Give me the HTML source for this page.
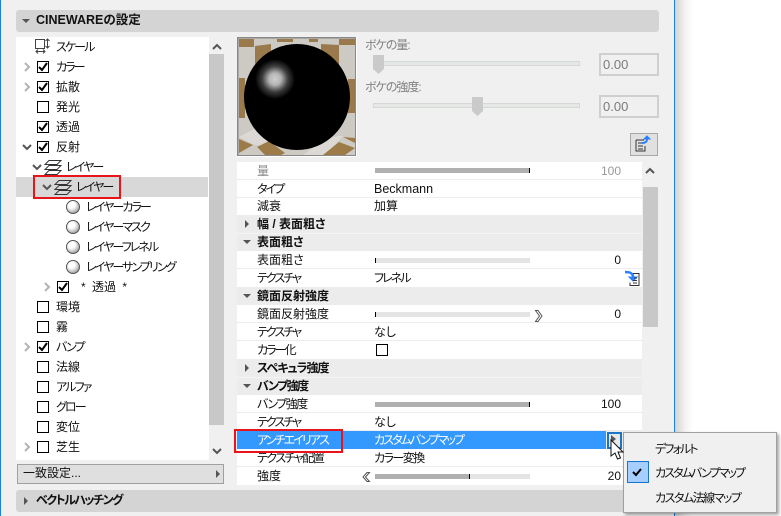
<!DOCTYPE html>
<html lang="ja"><head><meta charset="utf-8"><style>
html,body{margin:0;padding:0}
body{width:781px;height:516px;position:relative;overflow:hidden;background:#fff;font:12px/18px "Liberation Sans","Noto Sans CJK JP",sans-serif;color:#111;font-feature-settings:"palt"}
div,svg{position:absolute}
.t{white-space:nowrap;height:18px;line-height:18px}
.k{letter-spacing:-1.9px}
.m{letter-spacing:-1.5px}
.b{font-weight:bold}
.cb{width:10px;height:10px;border:1px solid #000;background:#fff;left:37px}
.row{left:237px;width:405px;height:17px;background:#fff;border-bottom:1px solid #ececec}
.grp{left:237px;width:405px;height:18px;background:#ececec}
.bar{left:375px;width:155px;height:5px}
.dk{background:#b0b0b0}.lt{background:#e4e4e4}
.tri{left:245px;width:0;height:0}
.r{border-top:4px solid transparent;border-bottom:4px solid transparent;border-left:4px solid #555}
.d{border-left:4px solid transparent;border-right:4px solid transparent;border-top:4px solid #555}
.radio{left:66px;width:14px;height:14px;border-radius:50%;border:1px solid #555;box-sizing:border-box;background:radial-gradient(circle at 38% 32%,#fff 30%,#bbb 65%,#666)}
.tr{text-align:right;width:60px;left:561px}
.sld{left:373px;width:205px;height:3px;background:#e6e8e6;border:1px solid #d5d9d5}
.fld{left:599px;width:56px;height:19px;border:2px solid #cfcfcf;background:#f0f0f0;color:#7a7a7a;font-size:13px;line-height:19px;text-indent:2px}
</style></head><body>
<div style="left:0;top:0;width:675px;height:516px;background:#f0f0f0"></div>
<div style="left:0;top:0;width:1px;height:516px;background:#1a80e0"></div>
<div style="left:674px;top:0;width:1px;height:516px;background:#1a80e0"></div>
<div style="left:675px;top:0;width:18px;height:516px;background:linear-gradient(90deg,#d4d4d4,#f4f4f4 60%,#fff)"></div>

<div style="left:16px;top:10px;width:643px;height:22px;background:#d4d4d4;border-radius:3px"></div>
<div class="tri d" style="left:22px;top:19px"></div>
<div class="t b" style="left:36px;top:11px;font-size:12.5px">CINEWAREの設定</div>

<div style="left:16px;top:37px;width:193px;height:423px;background:#fff"></div>
<div style="left:16px;top:177px;width:192px;height:20px;background:#d8d8d8"></div>
<div style="left:209px;top:54px;width:15px;height:371px;background:#c8c8c8"></div>

<div class="t k" style="left:56px;top:38px">スケール</div>
<div class="t k" style="left:56px;top:58px">カラー</div>
<div class="t" style="left:56px;top:78px">拡散</div>
<div class="t" style="left:56px;top:98px">発光</div>
<div class="t" style="left:56px;top:118px">透過</div>
<div class="t" style="left:56px;top:138px">反射</div>
<div class="t k" style="left:66px;top:158px">レイヤー</div>
<div class="t k" style="left:76px;top:178px">レイヤー</div>
<div class="t k" style="left:86px;top:198px">レイヤーカラー</div>
<div class="t k" style="left:86px;top:218px">レイヤーマスク</div>
<div class="t k" style="left:86px;top:238px">レイヤーフレネル</div>
<div class="t k" style="left:86px;top:258px">レイヤーサンプリング</div>
<div class="t" style="left:81px;top:278px;word-spacing:3px">* 透過 *</div>
<div class="t" style="left:56px;top:298px">環境</div>
<div class="t" style="left:56px;top:318px">霧</div>
<div class="t k" style="left:56px;top:338px">バンプ</div>
<div class="t" style="left:56px;top:358px">法線</div>
<div class="t k" style="left:56px;top:378px">アルファ</div>
<div class="t k" style="left:56px;top:398px">グロー</div>
<div class="t" style="left:56px;top:418px">変位</div>
<div class="t" style="left:56px;top:438px">芝生</div>

<div class="cb" style="top:61px"></div><div class="cb" style="top:81px"></div><div class="cb" style="top:101px"></div><div class="cb" style="top:121px"></div><div class="cb" style="top:141px"></div>
<div class="cb" style="top:281px;left:57px"></div>
<div class="cb" style="top:301px"></div><div class="cb" style="top:321px"></div><div class="cb" style="top:341px"></div><div class="cb" style="top:361px"></div><div class="cb" style="top:381px"></div><div class="cb" style="top:401px"></div><div class="cb" style="top:421px"></div><div class="cb" style="top:441px"></div>

<div class="radio" style="top:200px"></div><div class="radio" style="top:220px"></div><div class="radio" style="top:240px"></div><div class="radio" style="top:260px"></div>

<div style="left:17px;top:464px;width:205px;height:18px;background:#dfdfdf;border:1px solid #a0a0a0"></div>
<div class="t" style="left:23px;top:464px">一致設定...</div>
<div class="tri r" style="left:216px;top:470px"></div>

<div style="left:16px;top:490px;width:643px;height:22px;background:#d4d4d4;border-radius:3px"></div>
<div class="tri r" style="left:24px;top:497px"></div>
<div class="t b m" style="left:36px;top:491px">ベクトルハッチング</div>

<svg style="left:237px;top:37px;width:120px;height:120px" viewBox="0 0 120 120">
<defs><radialGradient id="g" gradientUnits="userSpaceOnUse" cx="38" cy="42" r="20"><stop offset="0" stop-color="#d0d0d0"/><stop offset=".3" stop-color="#b4b4b4"/><stop offset=".65" stop-color="#3c3c3c"/><stop offset="1" stop-color="#000"/></radialGradient></defs>
<rect width="120" height="120" fill="#cdcac4"/>
<path d="M2 2h15v8H2zM18 9l16-2v14l-16 8zM40 2h16v3H40zM72 2h9v3H72zM84 7l18 1v24L84 22zM102 2h16v6h-16zM2 41h6v40H2zM111 42h7v34h-7z" fill="#9a7a4c"/>
<path d="M2 100l15-8 20 14-5 2H18zM66 118l22-16 14-3 4 0-18 19z" fill="#dcd9d4"/>
<path d="M2 102l14 6-14 8zM20 110l12-6 16 12-4 2H28zM86 118l16-13 16 6-10 7zM106 100l12 6v-5z" fill="#9d7b49"/>
<rect x=".75" y=".75" width="118" height="118" fill="none" stroke="#888" stroke-width="1.500"/>
<rect x="119" y="0" width="1" height="120" fill="#fff"/><rect y="119" width="120" height="1" fill="#fff"/>
<circle cx="60" cy="60" r="53" fill="#000"/><circle cx="38" cy="42" r="20" fill="url(#g)"/>
</svg>

<div class="t" style="left:365px;top:36px;color:#808080;letter-spacing:-1px">ボケの量:</div>
<div class="t" style="left:365px;top:78px;color:#808080;letter-spacing:-1px">ボケの強度:</div>
<div class="sld" style="top:61px"></div>
<div class="sld" style="top:103px"></div>
<svg style="left:373px;top:55px;width:11px;height:20px"><path d="M0 0h11v14l-5.500 5L0 14z" fill="#cacaca"/></svg>
<svg style="left:472px;top:97px;width:11px;height:20px"><path d="M0 0h11v14l-5.500 5L0 14z" fill="#cacaca"/></svg>
<div class="fld" style="top:53px">0.00</div>
<div class="fld" style="top:95px">0.00</div>
<div style="left:630px;top:133px;width:26px;height:21px;background:#e0e0e0;border:1px solid #a8a8a8"></div>
<svg style="left:635px;top:135px;width:20px;height:18px" fill="none"><path d="M1 5h8M1 5v11h9v-5M3 8h5M3 11h5M3 14h5" stroke="#333" stroke-width="1"/><path d="M7 8c3 0 5-1 5-4" stroke="#2a80ff" stroke-width="2"/><path d="M9 4l3-3 3 3z" fill="#2a80ff" stroke="#2a80ff"/></svg>

<div class="row" style="top:162px"></div><div class="row" style="top:180px"></div><div class="row" style="top:198px;height:17px;border:0"></div>
<div class="grp" style="top:215px"></div><div class="grp" style="top:233px;border-top:1px solid #f4f4f4;height:17px"></div>
<div class="row" style="top:251px"></div><div class="row" style="top:269px;border:0;height:18px"></div>
<div class="grp" style="top:287px"></div>
<div class="row" style="top:305px"></div><div class="row" style="top:323px"></div><div class="row" style="top:341px;border:0;height:18px"></div>
<div class="grp" style="top:359px"></div><div class="grp" style="top:377px;border-top:1px solid #f4f4f4;height:17px"></div>
<div class="row" style="top:395px"></div><div class="row" style="top:413px"></div>
<div style="left:237px;top:431px;width:369px;height:18px;background:#3399ff"></div>
<div class="row" style="top:449px"></div><div class="row" style="top:467px;height:18px;border:0"></div>

<div class="t" style="left:257px;top:162px;color:#888">量</div>
<div class="t k" style="left:257px;top:180px">タイプ</div>
<div class="t" style="left:257px;top:197px">減衰</div>
<div class="t b" style="left:257px;top:215px">幅 / 表面粗さ</div>
<div class="t b" style="left:257px;top:233px">表面粗さ</div>
<div class="t" style="left:257px;top:251px">表面粗さ</div>
<div class="t k" style="left:257px;top:269px">テクスチャ</div>
<div class="t b" style="left:257px;top:287px">鏡面反射強度</div>
<div class="t" style="left:257px;top:305px">鏡面反射強度</div>
<div class="t k" style="left:257px;top:323px">テクスチャ</div>
<div class="t k" style="left:257px;top:341px">カラー化</div>
<div class="t b" style="left:257px;top:359px;letter-spacing:-1px">スペキュラ強度</div>
<div class="t b m" style="left:257px;top:377px">バンプ強度</div>
<div class="t m" style="left:257px;top:395px">バンプ強度</div>
<div class="t k" style="left:257px;top:413px">テクスチャ</div>
<div class="t k" style="left:257px;top:431px;color:#fff">アンチエイリアス</div>
<div class="t m" style="left:257px;top:449px">テクスチャ配置</div>
<div class="t" style="left:257px;top:467px">強度</div>

<div class="t" style="left:374px;top:180px;font-size:12.5px">Beckmann</div>
<div class="t" style="left:374px;top:197px">加算</div>
<div class="t k" style="left:374px;top:269px">フレネル</div>
<div class="t" style="left:374px;top:323px">なし</div>
<div class="t" style="left:374px;top:413px">なし</div>
<div class="t k" style="left:374px;top:431px;color:#fff">カスタムバンプマップ</div>
<div class="t m" style="left:374px;top:449px">カラー変換</div>

<div class="bar dk" style="top:168px"></div><div style="left:529px;top:168px;width:1px;height:5px;background:#000"></div>
<div class="bar lt" style="top:258px"></div><div style="left:375px;top:258px;width:1px;height:5px;background:#000"></div>
<div class="bar lt" style="top:312px"></div><div style="left:375px;top:312px;width:1px;height:5px;background:#000"></div>
<div class="bar dk" style="top:402px"></div><div style="left:529px;top:402px;width:1px;height:5px;background:#000"></div>
<div class="bar lt" style="top:474px"></div><div class="bar dk" style="top:474px;width:94px"></div><div style="left:469px;top:474px;width:1px;height:5px;background:#000"></div>
<div class="cb" style="left:376px;top:344px"></div>

<div class="t tr" style="top:162px;color:#999">100</div>
<div class="t tr" style="top:251px">0</div>
<div class="t tr" style="top:305px">0</div>
<div class="t tr" style="top:395px">100</div>
<div class="t tr" style="top:467px">20</div>

<div style="left:643px;top:187px;width:15px;height:140px;background:#c8c8c8"></div>

<div class="tri r" style="left:245px;top:220px"></div>
<div class="tri d" style="left:243px;top:240px"></div>
<div class="tri d" style="left:243px;top:294px"></div>
<div class="tri r" style="left:245px;top:364px"></div>
<div class="tri d" style="left:243px;top:384px"></div>

<div style="left:607px;top:432px;width:11px;height:13px;background:#e8e8e8;border:2px solid #1b74c8"></div>
<div class="tri r" style="left:611px;top:435px;border-left-width:5px"></div>

<div style="left:623px;top:432px;width:152px;height:79px;background:#f0f0f0;border:1px solid #a0a0a0;box-shadow:2px 2px 3px rgba(0,0,0,.35)"></div>
<div style="left:627px;top:461px;width:20px;height:20px;background:#a6cfff;border:1px solid #1b74c8"></div>
<div class="t k" style="left:655px;top:440px">デフォルト</div>
<div class="t k" style="left:655px;top:464px">カスタムバンプマップ</div>
<div class="t m" style="left:655px;top:489px">カスタム法線マップ</div>

<svg style="left:0;top:0;width:781px;height:516px" fill="none">
<g stroke="#b4b4b4" stroke-width="2"><path d="M25 63l4 4-4 4M25 83l4 4-4 4M25 343l4 4-4 4M25 443l4 4-4 4M45 283l4 4-4 4"/></g>
<g stroke="#555" stroke-width="2"><path d="M23 145l4 4 4-4M33 165l4 4 4-4M43 185l4 4 4-4"/><path d="M213 49l4-4 4 4M213 449l4 4 4-4M646 173l4-4 4 4"/></g>
<g stroke="#000" stroke-width="2"><path d="M39 67l3 3 5-7M39 87l3 3 5-7M39 127l3 3 5-7M39 147l3 3 5-7M59 287l3 3 5-7M39 347l3 3 5-7"/></g>
<g stroke="#444"><rect x="35.500" y="39.500" width="9" height="9"/><path d="M47.500 39v9M45.500 41l2-2 2 2M45.500 46l2 2 2-2M36 51.500h9M38 49.500l-2 2 2 2M43 49.500l2 2-2 2"/></g>
<g stroke="#333"><path d="M49 160.500h12l-4 4H45zM49 165.500h12l-4 4H45zM49 170.500h12l-4 4H45z"/><path d="M59 180.500h12l-4 4H55zM59 185.500h12l-4 4H55zM59 190.500h12l-4 4H55z"/></g>
<rect x="34" y="176" width="86" height="22" stroke="#e8141c" stroke-width="2"/>
<rect x="235" y="430" width="107" height="22" stroke="#e8141c" stroke-width="2"/>
<path d="M535.500 310.500h2.500l4 5.500-4 5.500h-2.500l4-5.500z" stroke="#555"/>
<path d="M369.500 472.500h-2.500l-4 4.500 4 4.500h2.500l-4-4.500z" stroke="#555"/>
<path d="M625 272c5 0 8 1 8 5" stroke="#2a80ff" stroke-width="2.500"/><path d="M629 277h8l-4 4z" fill="#2a80ff" stroke="#2a80ff"/>
<path d="M633 273.500h6v12h-9v-3M634 278h3M633 280.500h4M633 283h4" stroke="#333"/>
<path d="M611 440v16l4-3 2.500 6 3-1-2.500-6h5z" fill="#fff" stroke="#111"/>
<path d="M633 472l3 3 5-6" stroke="#000" stroke-width="2"/>
</svg>
</body></html>
